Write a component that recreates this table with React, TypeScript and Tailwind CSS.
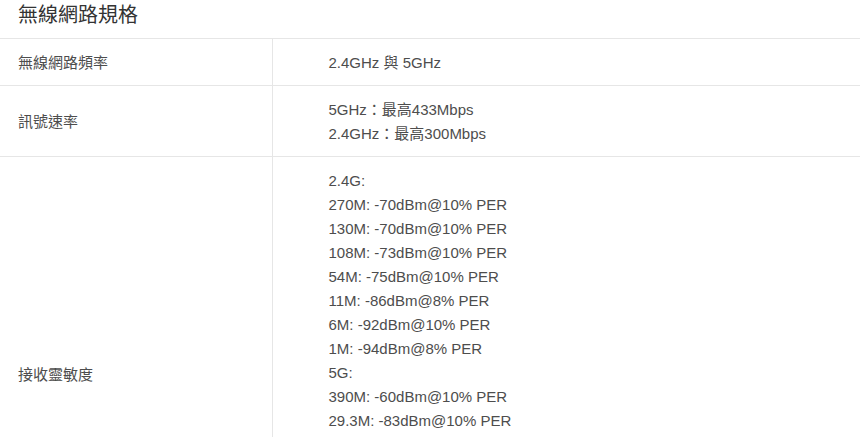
import React from "react";

const sensitivity = [
  "2.4G:",
  "270M: -70dBm@10% PER",
  "130M: -70dBm@10% PER",
  "108M: -73dBm@10% PER",
  "54M: -75dBm@10% PER",
  "11M: -86dBm@8% PER",
  "6M: -92dBm@10% PER",
  "1M: -94dBm@8% PER",
  "5G:",
  "390M: -60dBm@10% PER",
  "29.3M: -83dBm@10% PER",
];

const rows: { label: string; values: string[]; tall?: boolean }[] = [
  { label: "無線網路頻率", values: ["2.4GHz 與 5GHz"] },
  { label: "訊號速率", values: ["5GHz：最高433Mbps", "2.4GHz：最高300Mbps"] },
  { label: "接收靈敏度", values: sensitivity, tall: true },
];

export default function App() {
  return (
    <div
      className="w-[860px] h-[437px] overflow-hidden bg-white text-[#4d4d4d]"
      style={{ fontFamily: '"Liberation Sans", Arial, "Noto Sans CJK TC", sans-serif' }}
    >
      <h2 className="pl-[18px] text-[20px] leading-[30px] h-[38px] text-[#333]">
        無線網路規格
      </h2>
      <table className="w-full border-collapse text-[15px] leading-[24px]">
        <tbody>
          {rows.map((row) => (
            <tr
              key={row.label}
              className={row.tall ? "h-[434px] border-t border-[#e6e6e6]" : "border-t border-[#e6e6e6]"}
            >
              <td className="w-[272px] pl-[18px] pt-[2px] align-middle border-r border-[#e6e6e6]">
                {row.label}
              </td>
              <td className="pl-[56px] pt-[12px] pb-[10px] align-top">
                {row.values.map((v, i) => (
                  <div key={i} className="h-[24px]">
                    {v}
                  </div>
                ))}
              </td>
            </tr>
          ))}
        </tbody>
      </table>
    </div>
  );
}
